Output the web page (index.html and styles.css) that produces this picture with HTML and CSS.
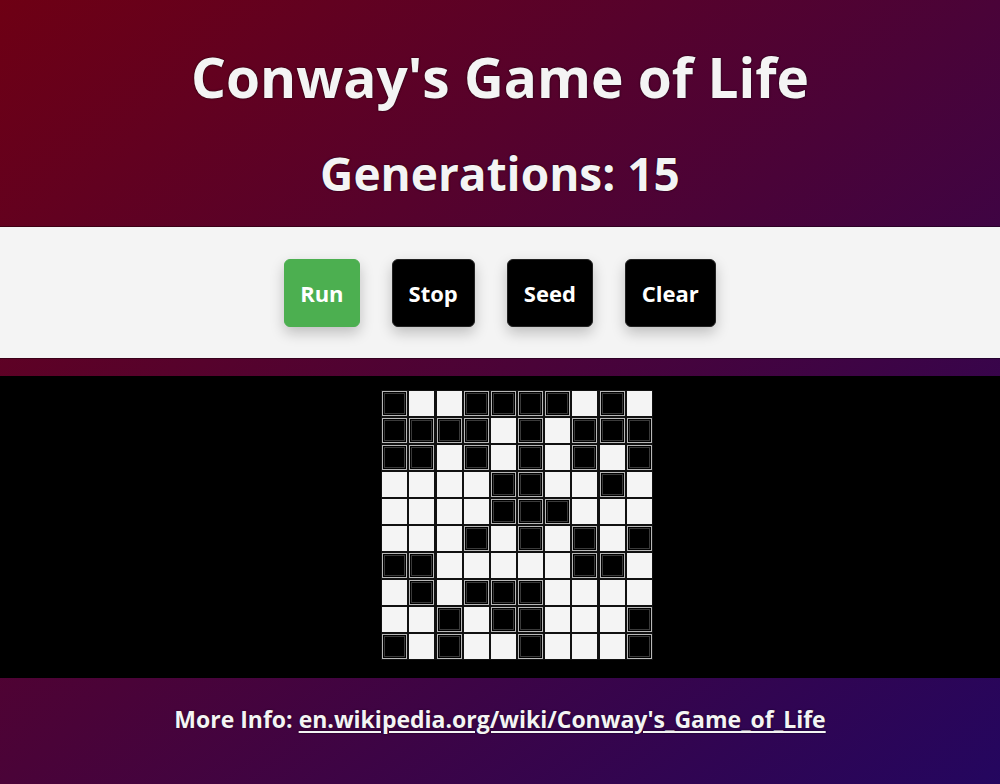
FILE: index.html
```html
<!DOCTYPE html>
<html lang="en">
<head>
<meta charset="utf-8">
<title>Conway's Game of Life</title>
<link rel="stylesheet" href="styles.css">
</head>
<body>
<div class="page">
  <header class="header">
    <h1 class="title">Conway's Game of Life</h1>
    <h2 class="gens">Generations: 15</h2>
  </header>
  <section class="controls">
    <button class="btn btn-run">Run</button>
    <button class="btn">Stop</button>
    <button class="btn">Seed</button>
    <button class="btn">Clear</button>
  </section>
  <div class="spacer"></div>
  <section class="board">
    <div class="grid" id="grid">
      <div class="cell on"></div><div class="cell"></div><div class="cell"></div><div class="cell on"></div><div class="cell on"></div><div class="cell on"></div><div class="cell on"></div><div class="cell"></div><div class="cell on"></div><div class="cell"></div>
      <div class="cell on"></div><div class="cell on"></div><div class="cell on"></div><div class="cell on"></div><div class="cell"></div><div class="cell on"></div><div class="cell"></div><div class="cell on"></div><div class="cell on"></div><div class="cell on"></div>
      <div class="cell on"></div><div class="cell on"></div><div class="cell"></div><div class="cell on"></div><div class="cell"></div><div class="cell on"></div><div class="cell"></div><div class="cell on"></div><div class="cell"></div><div class="cell on"></div>
      <div class="cell"></div><div class="cell"></div><div class="cell"></div><div class="cell"></div><div class="cell on"></div><div class="cell on"></div><div class="cell"></div><div class="cell"></div><div class="cell on"></div><div class="cell"></div>
      <div class="cell"></div><div class="cell"></div><div class="cell"></div><div class="cell"></div><div class="cell on"></div><div class="cell on"></div><div class="cell on"></div><div class="cell"></div><div class="cell"></div><div class="cell"></div>
      <div class="cell"></div><div class="cell"></div><div class="cell"></div><div class="cell on"></div><div class="cell"></div><div class="cell on"></div><div class="cell"></div><div class="cell on"></div><div class="cell"></div><div class="cell on"></div>
      <div class="cell on"></div><div class="cell on"></div><div class="cell"></div><div class="cell"></div><div class="cell"></div><div class="cell"></div><div class="cell"></div><div class="cell on"></div><div class="cell on"></div><div class="cell"></div>
      <div class="cell"></div><div class="cell on"></div><div class="cell"></div><div class="cell on"></div><div class="cell on"></div><div class="cell on"></div><div class="cell"></div><div class="cell"></div><div class="cell"></div><div class="cell"></div>
      <div class="cell"></div><div class="cell"></div><div class="cell on"></div><div class="cell"></div><div class="cell on"></div><div class="cell on"></div><div class="cell"></div><div class="cell"></div><div class="cell"></div><div class="cell on"></div>
      <div class="cell on"></div><div class="cell"></div><div class="cell on"></div><div class="cell"></div><div class="cell"></div><div class="cell on"></div><div class="cell"></div><div class="cell"></div><div class="cell"></div><div class="cell on"></div>
    </div>
  </section>
  <footer class="footer">
    <p class="info">More Info: <a class="link" href="#">en.wikipedia.org/wiki/Conway's_Game_of_Life</a></p>
  </footer>
</div>
</body>
</html>
```

FILE: styles.css
```css
html, body {
  margin: 0;
  padding: 0;
}
body {
  font-family: "Open Sans", Lato, sans-serif;
  color: #f4f4f4;
  background: linear-gradient(to bottom right, #6e0014 0%, #4a0338 50%, #24065f 100%);
  min-height: 784px;
}
.page {
  display: flex;
  flex-direction: column;
  min-height: 784px;
}
.header {
  display: flex;
  flex-direction: column;
  align-items: center;
  padding-top: 37px;
  height: 190px;
  box-sizing: border-box;
  height: 227px;
}
.title {
  margin: 0;
  font-size: 55px;
  line-height: 80px;
  font-weight: 700;
  color: #f4f4f4;
  text-shadow: 0 0 2px rgba(0,0,0,0.9);
}
.gens {
  margin: 26px 0 0;
  font-size: 46px;
  line-height: 60px;
  font-weight: 700;
  color: #f4f4f4;
  text-shadow: 0 0 2px rgba(0,0,0,0.9);
}
.controls {
  height: 131px;
  background: #f4f4f4;
  display: flex;
  justify-content: center;
  align-items: center;
  gap: 32px;
  box-shadow: 0 -1px 0 rgba(0,0,0,0.35), 0 1px 0 rgba(0,0,0,0.35);
}
.btn {
  font-family: "Open Sans", Lato, sans-serif;
  font-size: 22px;
  font-weight: 700;
  color: #fff;
  background: #000;
  border: 1px solid #222;
  border-radius: 6px;
  height: 68px;
  padding: 0 16px;
  box-shadow: 0 6px 14px rgba(0,0,0,0.22);
  cursor: pointer;
}
.btn-run {
  background: #4caf50;
  border-color: #4caf50;
  padding: 0 15px;
}
.spacer {
  height: 18px;
}
.board {
  background: #000;
  height: 302px;
  display: flex;
  justify-content: center;
  padding: 14px 0 0 34px;
  box-sizing: border-box;
}
.grid {
  display: grid;
  grid-template-columns: repeat(10, 25px);
  grid-auto-rows: 25px;
  column-gap: 2.2px;
  row-gap: 2px;
  align-content: start;
  padding: 1px;
  background: #111;
  height: max-content;
}
.cell {
  width: 25px;
  height: 25px;
  box-sizing: border-box;
  background: #f4f4f4;
}
.cell.on {
  background: #000;
  border: 1px solid #b8b8b8;
  box-shadow: inset 0 0 0 1px #000, inset 0 0 0 2px #3a3a3a;
}
.footer {
  flex: 1;
  display: flex;
  justify-content: center;
  align-items: flex-start;
  padding-top: 26px;
  height: 106px;
  box-sizing: border-box;
}
.info {
  margin: 0;
  font-size: 23px;
  line-height: 30px;
  font-weight: 700;
  color: #f4f4f4;
  text-shadow: 0 0 2px rgba(0,0,0,0.6);
}
.link {
  color: #f4f4f4;
  text-decoration: underline;
  text-underline-offset: 3px;
}
```
